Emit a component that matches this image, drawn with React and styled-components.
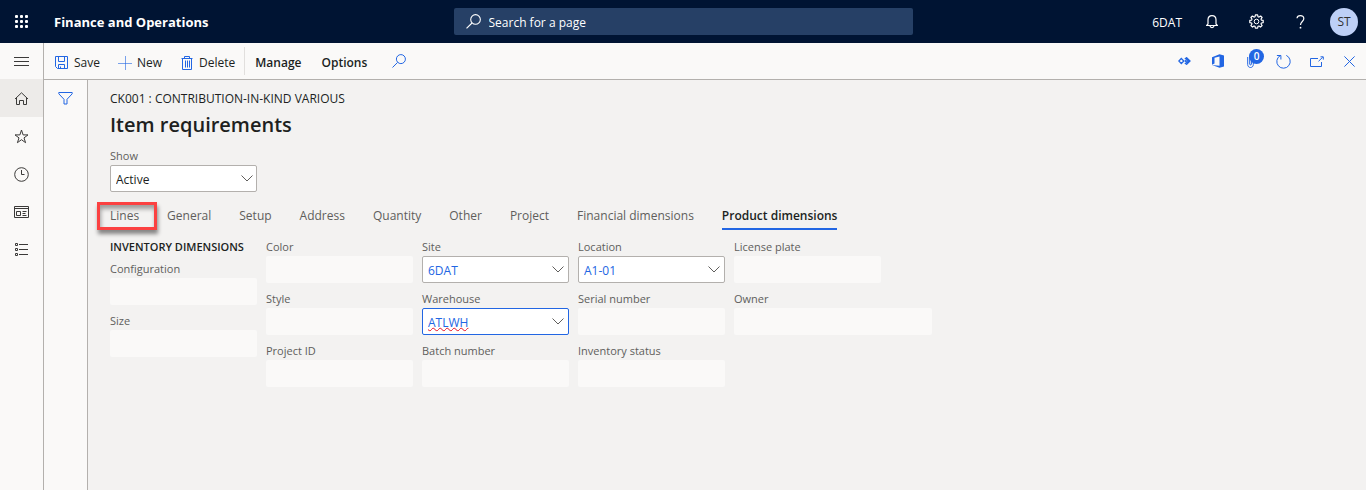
import React, { useId } from "react";
import styled, { createGlobalStyle, css } from "styled-components";

const blue = "#2266e3";

const GlobalStyle = createGlobalStyle`
  *, *::before, *::after { box-sizing: border-box; }
  body {
    margin: 0;
    background: #f3f2f1;
    color: #201f1e;
    font: 12px/18px "Open Sans", "Noto Sans", sans-serif;
  }
  button, input, select { font: inherit; color: inherit; }
  button { margin: 0; padding: 0; border: 0; background: none; cursor: pointer; }
  svg { display: block; flex: none; }
`;

/* ---------- icons ---------- */

const Svg = styled.svg.attrs({ "aria-hidden": true })`
  width: ${(p) => p.$w}px;
  height: ${(p) => p.$h || p.$w}px;
  fill: none;
  stroke: currentColor;
  stroke-width: 1;
`;

const WaffleIcon = () => (
  <Svg $w={15} viewBox="0 0 15 15">
    {[1, 6, 11].map((y) =>
      [1, 6, 11].map((x) => (
        <rect key={`${x}-${y}`} x={x} y={y} width="3" height="3" rx="1" fill="currentColor" stroke="none" />
      ))
    )}
  </Svg>
);

const MenuIcon = () => (
  <Svg $w={15} $h={14} viewBox="0 0 15 14"><path d="M0 3.500h15M0 7.500h15M0 11.500h15" /></Svg>
);

const HomeIcon = () => (
  <Svg $w={15} viewBox="0 0 15 15">
    <path d="M1 8 7.500 1.800 14 8M2.500 6.700v6.800h3v-4h4v4h3V6.700" />
  </Svg>
);

const StarIcon = () => (
  <Svg $w={15} viewBox="0 0 15 15">
    <path d="M7.500 1l1.600 4.900h4.900L10 8.900l1.600 4.800-4.100-3-4.100 3L5 8.900 1 5.900h4.900z" />
  </Svg>
);

const ClockIcon = () => (
  <Svg $w={15} viewBox="0 0 15 15">
    <circle cx="7.500" cy="7.500" r="6.800" />
    <path d="M7.500 3v4.500h3" />
  </Svg>
);

const WorkspaceIcon = () => (
  <Svg $w={15} $h={12} viewBox="0 0 15 12">
    <path d="M.5.500h14v11H.5zM.5 2.500h14M2.500 5.500h4v4h-4zM8.500 5.500h4M8.500 7.500h3M8.500 9.500h4" />
  </Svg>
);

const ModulesIcon = () => (
  <Svg $w={15} $h={14} viewBox="0 0 15 14">
    <path d="M1.500.500h2v2h-2zM1.500 5.500h2v2h-2zM1.500 10.500h2v2h-2zM5 1.500h9M5 6.500h9M5 11.500h9" />
  </Svg>
);

const FilterIcon = () => (
  <Svg $w={15} $h={14} viewBox="0 0 15 14">
    <path d="M.8 1.500h13.400v1.300L9 8.300v4.700H6V8.300L.8 2.800z" />
  </Svg>
);

const SaveIcon = () => (
  <Svg $w={14} viewBox="0 0 14 14">
    <path d="M.5.500h12v12H2.500L.5 10.500zM3.500.500v5h6v-5M3.500 12.500v-4h6v4M5.500 12.500v-2" />
  </Svg>
);

const PlusIcon = () => (
  <Svg $w={14} viewBox="0 0 14 14"><path d="M7.500 0v14M0 7.500h14" opacity=".6" /></Svg>
);

const TrashIcon = () => (
  <Svg $w={14} viewBox="-1 0 14 14">
    <path d="M.5 2.500h11M3.500 2.500v-2h5v2M1.500 2.500v11h9v-11M4.500 4.500v7M6.500 4.500v7M8.500 4.500v7" />
  </Svg>
);

const SearchIcon = ({ size = 14 }) => (
  <Svg $w={size} viewBox="0 0 14 14">
    <circle cx="8.900" cy="5.100" r="4.500" />
    <path d="M5.600 8.400.500 13.500" />
  </Svg>
);

const BellIcon = () => (
  <Svg $w={12} $h={14} viewBox="0 0 12 14">
    <path d="M.5 10.500h11L10 9V4.800C10 2.400 8.300.700 6 .7S2 2.400 2 4.800V9zM4 11c.3 2.100 3.700 2.100 4 0" strokeWidth="1.200" />
  </Svg>
);

const GearIcon = () => (
  <Svg $w={15} viewBox="0 0 15 15">
    <circle cx="7.500" cy="7.500" r="2.300" />
    <path
      strokeWidth="1.200"
      strokeLinejoin="round"
      d="M6.400.800h2.200l.4 1.900 1 .4 1.600-1.100 1.500 1.500L12 5.100l.4 1 1.800.3v2.200l-1.800.4-.4 1 1.100 1.500-1.600 1.600L10 12l-1 .4-.4 1.800H6.400L6 12.400 5 12l-1.500 1.100-1.600-1.600L3 10l-.4-1-1.800-.4V6.400l1.800-.3.4-1-1.100-1.600L3.400 2 5 3.100l1-.4z"
    />
  </Svg>
);

const HelpIcon = () => (
  <Svg $w={9} $h={14} viewBox="0 0 9 14">
    <path d="M1 3.200C1.200 1.600 2.600.700 4.300.700 6.400.700 7.800 1.900 7.800 3.700c0 2.700-3.300 3-3.300 6.300" strokeWidth="1.200" />
    <circle cx="4.500" cy="12.700" r=".9" fill="currentColor" stroke="none" />
  </Svg>
);

const LinksIcon = () => (
  <Svg $w={13} $h={8} viewBox="0 0 13 8">
    <path d="M3.300 1.500 5.800 4 3.300 6.500.8 4zM8.800 2.500 10.300 4 8.800 5.500 7.300 4zM6.800 2 8.600.700 12 4 8.600 7.300 6.800 6" strokeWidth="1.300" />
  </Svg>
);

const OfficeIcon = () => (
  <Svg $w={12} $h={14} viewBox="0 0 12 14">
    <path d="M0 3.200 7.500.200 12 1.500v11L7.500 13.800 0 11l7.500.8V2.500L2.500 3.700v5.700L0 10.800z" fill="currentColor" stroke="none" />
  </Svg>
);

const ClipIcon = () => (
  <Svg $w={8} $h={14} viewBox="0 0 8 14">
    <path d="M.7 3v7.500c0 4 5.600 4 5.600 0V2.500c0-2.500-3.600-2.500-3.600 0V10c0 1.300 1.700 1.300 1.700 0V4" />
  </Svg>
);

const RefreshIcon = () => (
  <Svg $w={15} viewBox="0 0 15 15">
    <path d="M10.300 1.400A6.700 6.700 0 1 1 4.300 1.600M.9 1.500h4v4" />
  </Svg>
);

const PopOutIcon = () => (
  <Svg $w={14} $h={11} viewBox="0 0 14 11">
    <path d="M8 2.500H.5v8h11V6M8.500 5.300 12.700 1.200M10.500.800h2.800v2.800" />
  </Svg>
);

const CloseIcon = () => (
  <Svg $w={11} viewBox="0 0 11 11"><path d="M.4.400l10.200 10.200M10.600.400.400 10.600" /></Svg>
);

const ChevronIcon = () => (
  <Svg $w={12} $h={7} viewBox="0 0 12 7"><path d="M.5.500 6 6 11.500.500" /></Svg>
);

/* ---------- top bar ---------- */

const TopBar = styled.header`
  display: grid;
  grid-template-columns: 1fr minmax(160px, 459px) 1fr;
  align-items: center;
  height: 43px;
  background: #001433;
  color: #fff;
`;

const Brand = styled.div`
  display: flex;
  align-items: center;
  gap: 11px;
  font-size: 13px;
  font-weight: 700;
  white-space: nowrap;
`;

const IconButton = styled.button`
  display: flex;
  align-items: center;
  justify-content: center;
  width: ${(p) => p.$w}px;
  height: ${(p) => p.$h || 36}px;
  background: ${(p) => (p.$active ? "#edebe9" : "none")};
  ${(p) => p.$tinted && `color: ${blue};`}
`;

const SearchBox = styled.label`
  display: flex;
  align-items: center;
  gap: 8px;
  height: 27px;
  padding: 0 12px;
  border-radius: 2px;
  background: #264066;
`;

const SearchInput = styled.input`
  flex: 1;
  min-width: 0;
  padding: 2px 0 0;
  border: 0;
  outline: 0;
  background: none;
  &::placeholder { color: #fff; opacity: 1; }
`;

const Account = styled.div`
  display: flex;
  align-items: center;
  justify-content: flex-end;
`;

const Company = styled.span`
  padding: 2px 8px 0 0;
`;

const Avatar = styled.span`
  display: grid;
  place-items: center;
  width: 28px;
  height: 28px;
  border-radius: 50%;
  background: #bdd0f7;
  color: #323130;
`;

/* ---------- shell ---------- */

const Shell = styled.div`
  display: flex;
  min-height: calc(100vh - 43px);
`;

const SideNav = styled.nav`
  display: flex;
  flex-direction: column;
  width: 44px;
  border-right: 1px solid #b3b0ad;
  background: #faf9f8;
  color: #3b3a39;
`;

const Workspace = styled.div`
  display: flex;
  flex: 1;
  flex-direction: column;
  min-width: 0;
`;

const Toolbar = styled.div`
  display: flex;
  align-items: center;
  justify-content: space-between;
  height: 37px;
  padding-left: 2px;
  border-bottom: 1px solid #b3b0ad;
  background: #faf9f8;
`;

const ToolGroup = styled.div`
  display: flex;
  align-items: center;
  color: ${(p) => (p.$tinted ? blue : "inherit")};
`;

const Action = styled.button`
  display: flex;
  align-items: center;
  gap: 5px;
  height: 36px;
  padding: 3px ${(p) => (p.$strong ? 10 : 9)}px 0;
  font-weight: ${(p) => (p.$strong ? 600 : 400)};
  svg { color: ${blue}; }
`;

const Separator = styled.span`
  width: 1px;
  height: 28px;
  background: #e1dfdd;
`;

const AttachmentButton = styled(IconButton)`
  position: relative;
`;

const Badge = styled.span`
  position: absolute;
  top: 6px;
  right: 3px;
  width: 15px;
  height: 15px;
  border-radius: 50%;
  background: ${blue};
  color: #fff;
  font-size: 10px;
  font-weight: 600;
  line-height: 14px;
  text-align: center;
`;

const Body = styled.div`
  display: flex;
  flex: 1;
`;

const FilterPane = styled.aside`
  width: 44px;
  border-right: 1px solid #b3b0ad;
  background: #faf9f8;
  color: ${blue};
`;

const Page = styled.main`
  flex: 1;
  min-width: 0;
  padding: 10px 22px 24px;
`;

const Title = styled.h1`
  margin: 3px 0 10px;
  font-size: 20px;
  font-weight: 600;
  line-height: 27px;
`;

/* ---------- tabs ---------- */

const TabList = styled.div`
  display: flex;
  flex-wrap: wrap;
  gap: 0 28px;
  margin: 12px 0 9px;
`;

const Tab = styled.button`
  position: relative;
  height: 26px;
  padding: 0 0 1px;
  border-bottom: 2px solid transparent;
  line-height: 23px;
  color: #605e5c;
  ${(p) =>
    p["aria-selected"] &&
    css`
      border-color: ${blue};
      color: #201f1e;
      font-weight: 600;
    `}
`;

const Callout = styled.span`
  position: absolute;
  inset: -2px -18px -2px -13px;
  border: 3px solid #fb4141;
  box-shadow: 1px 4px 4px rgba(0, 0, 0, 0.45), inset 1px 4px 4px rgba(0, 0, 0, 0.35);
  pointer-events: none;
`;

/* ---------- fields ---------- */

const Columns = styled.div`
  display: flex;
  flex-wrap: wrap;
  gap: 9px;
`;

const Column = styled.div`
  display: flex;
  flex-direction: column;
  gap: 8px;
`;

const SectionTitle = styled.h2`
  margin: 0 0 -1px;
  font-size: 11px;
  font-weight: 600;
  line-height: 15px;
`;

const FieldWrap = styled.div`
  display: flex;
  flex-direction: column;
  width: ${(p) => (p.$wide ? 198 : 147)}px;
`;

const FieldLabel = styled.label`
  padding-bottom: 1px;
  color: #605e5c;
  font-size: 11px;
  line-height: 16px;
`;

const frame = css`
  height: 27px;
  border: 1px solid ${(p) => (p.$focused ? blue : "#b3b0ad")};
  border-radius: 2px;
  background: #fff;
`;

const PlainInput = styled.input`
  width: 100%;
  height: 27px;
  padding: 0 5px;
  border: 0;
  border-radius: 2px;
  background: #faf9f8;
`;

const LookupBox = styled.div`
  ${frame}
  display: flex;
  align-items: center;
`;

const LookupInput = styled.input`
  flex: 1;
  min-width: 0;
  padding: 2px 0 0 5px;
  border: 0;
  outline: 0;
  background: none;
  color: ${blue};
  ${(p) =>
    p.$misspelled &&
    css`
      text-decoration: underline wavy #e81123 1px;
      text-underline-offset: 0;
      text-decoration-skip-ink: none;
    `}
`;

const LookupButton = styled.button`
  display: grid;
  place-items: center;
  width: 20px;
  height: 25px;
  color: #605e5c;
`;

const SelectBox = styled.div`
  display: grid;
  align-items: center;
  > * { grid-area: 1 / 1; }
  > svg { justify-self: end; margin-right: 4px; color: #605e5c; pointer-events: none; }
`;

const Select = styled.select`
  ${frame}
  appearance: none;
  width: 100%;
  padding: 2px 20px 0 5px;
`;

const Field = ({ label, wide }) => {
  const id = useId();
  return (
    <FieldWrap $wide={wide}>
      <FieldLabel htmlFor={id}>{label}</FieldLabel>
      <PlainInput id={id} readOnly />
    </FieldWrap>
  );
};

const Lookup = ({ label, value, focused, misspelled }) => {
  const id = useId();
  return (
    <FieldWrap>
      <FieldLabel htmlFor={id}>{label}</FieldLabel>
      <LookupBox $focused={focused}>
        <LookupInput id={id} defaultValue={value} $misspelled={misspelled} />
        <LookupButton type="button" aria-label={`Open ${label}`}><ChevronIcon /></LookupButton>
      </LookupBox>
    </FieldWrap>
  );
};

const tabs = [
  "Lines", "General", "Setup", "Address", "Quantity", "Other",
  "Project", "Financial dimensions", "Product dimensions",
];

export default function App() {
  return (
    <>
      <GlobalStyle />
      <TopBar>
        <Brand>
          <IconButton $w={43} aria-label="App launcher"><WaffleIcon /></IconButton>
          Finance and Operations
        </Brand>
        <SearchBox>
          <SearchIcon size={15} />
          <SearchInput aria-label="Search" placeholder="Search for a page" />
        </SearchBox>
        <Account>
          <Company>6DAT</Company>
          <IconButton $w={44} aria-label="Notifications"><BellIcon /></IconButton>
          <IconButton $w={44} aria-label="Settings"><GearIcon /></IconButton>
          <IconButton $w={44} aria-label="Help"><HelpIcon /></IconButton>
          <IconButton $w={44} aria-label="Account"><Avatar>ST</Avatar></IconButton>
        </Account>
      </TopBar>

      <Shell>
        <SideNav aria-label="Main">
          <IconButton $w={43} aria-label="Expand menu"><MenuIcon /></IconButton>
          <IconButton $w={43} $h={38} $active aria-label="Home"><HomeIcon /></IconButton>
          <IconButton $w={43} $h={38} aria-label="Favorites"><StarIcon /></IconButton>
          <IconButton $w={43} $h={38} aria-label="Recent"><ClockIcon /></IconButton>
          <IconButton $w={43} $h={38} aria-label="Workspaces"><WorkspaceIcon /></IconButton>
          <IconButton $w={43} $h={38} aria-label="Modules"><ModulesIcon /></IconButton>
        </SideNav>

        <Workspace>
          <Toolbar>
            <ToolGroup>
              <Action><SaveIcon />Save</Action>
              <Action><PlusIcon />New</Action>
              <Action><TrashIcon />Delete</Action>
              <Separator />
              <Action $strong>Manage</Action>
              <Action $strong>Options</Action>
              <IconButton $w={44} $tinted aria-label="Search actions"><SearchIcon /></IconButton>
            </ToolGroup>
            <ToolGroup $tinted>
              <IconButton $w={33} aria-label="Related links"><LinksIcon /></IconButton>
              <IconButton $w={33} aria-label="Open in Office"><OfficeIcon /></IconButton>
              <AttachmentButton $w={33} aria-label="Attachments"><ClipIcon /><Badge>0</Badge></AttachmentButton>
              <IconButton $w={33} aria-label="Refresh"><RefreshIcon /></IconButton>
              <IconButton $w={33} aria-label="Open in new window"><PopOutIcon /></IconButton>
              <IconButton $w={33} aria-label="Close"><CloseIcon /></IconButton>
            </ToolGroup>
          </Toolbar>

          <Body>
            <FilterPane>
              <IconButton $w={43} aria-label="Show filters"><FilterIcon /></IconButton>
            </FilterPane>
            <Page>
              <div>CK001 : CONTRIBUTION-IN-KIND VARIOUS</div>
              <Title>Item requirements</Title>
              <FieldWrap>
                <FieldLabel htmlFor="show">Show</FieldLabel>
                <SelectBox>
                  <Select id="show"><option>Active</option></Select>
                  <ChevronIcon />
                </SelectBox>
              </FieldWrap>

              <TabList role="tablist">
                {tabs.map((t) => (
                  <Tab key={t} role="tab" aria-selected={t === "Product dimensions"}>
                    {t}
                    {t === "Lines" && <Callout />}
                  </Tab>
                ))}
              </TabList>

              <Columns>
                <Column>
                  <SectionTitle>INVENTORY DIMENSIONS</SectionTitle>
                  <Field label="Configuration" />
                  <Field label="Size" />
                </Column>
                <Column>
                  <Field label="Color" />
                  <Field label="Style" />
                  <Field label="Project ID" />
                </Column>
                <Column>
                  <Lookup label="Site" value="6DAT" />
                  <Lookup label="Warehouse" value="ATLWH" focused misspelled />
                  <Field label="Batch number" />
                </Column>
                <Column>
                  <Lookup label="Location" value="A1-01" />
                  <Field label="Serial number" />
                  <Field label="Inventory status" />
                </Column>
                <Column>
                  <Field label="License plate" />
                  <Field label="Owner" wide />
                </Column>
              </Columns>
            </Page>
          </Body>
        </Workspace>
      </Shell>
    </>
  );
}
